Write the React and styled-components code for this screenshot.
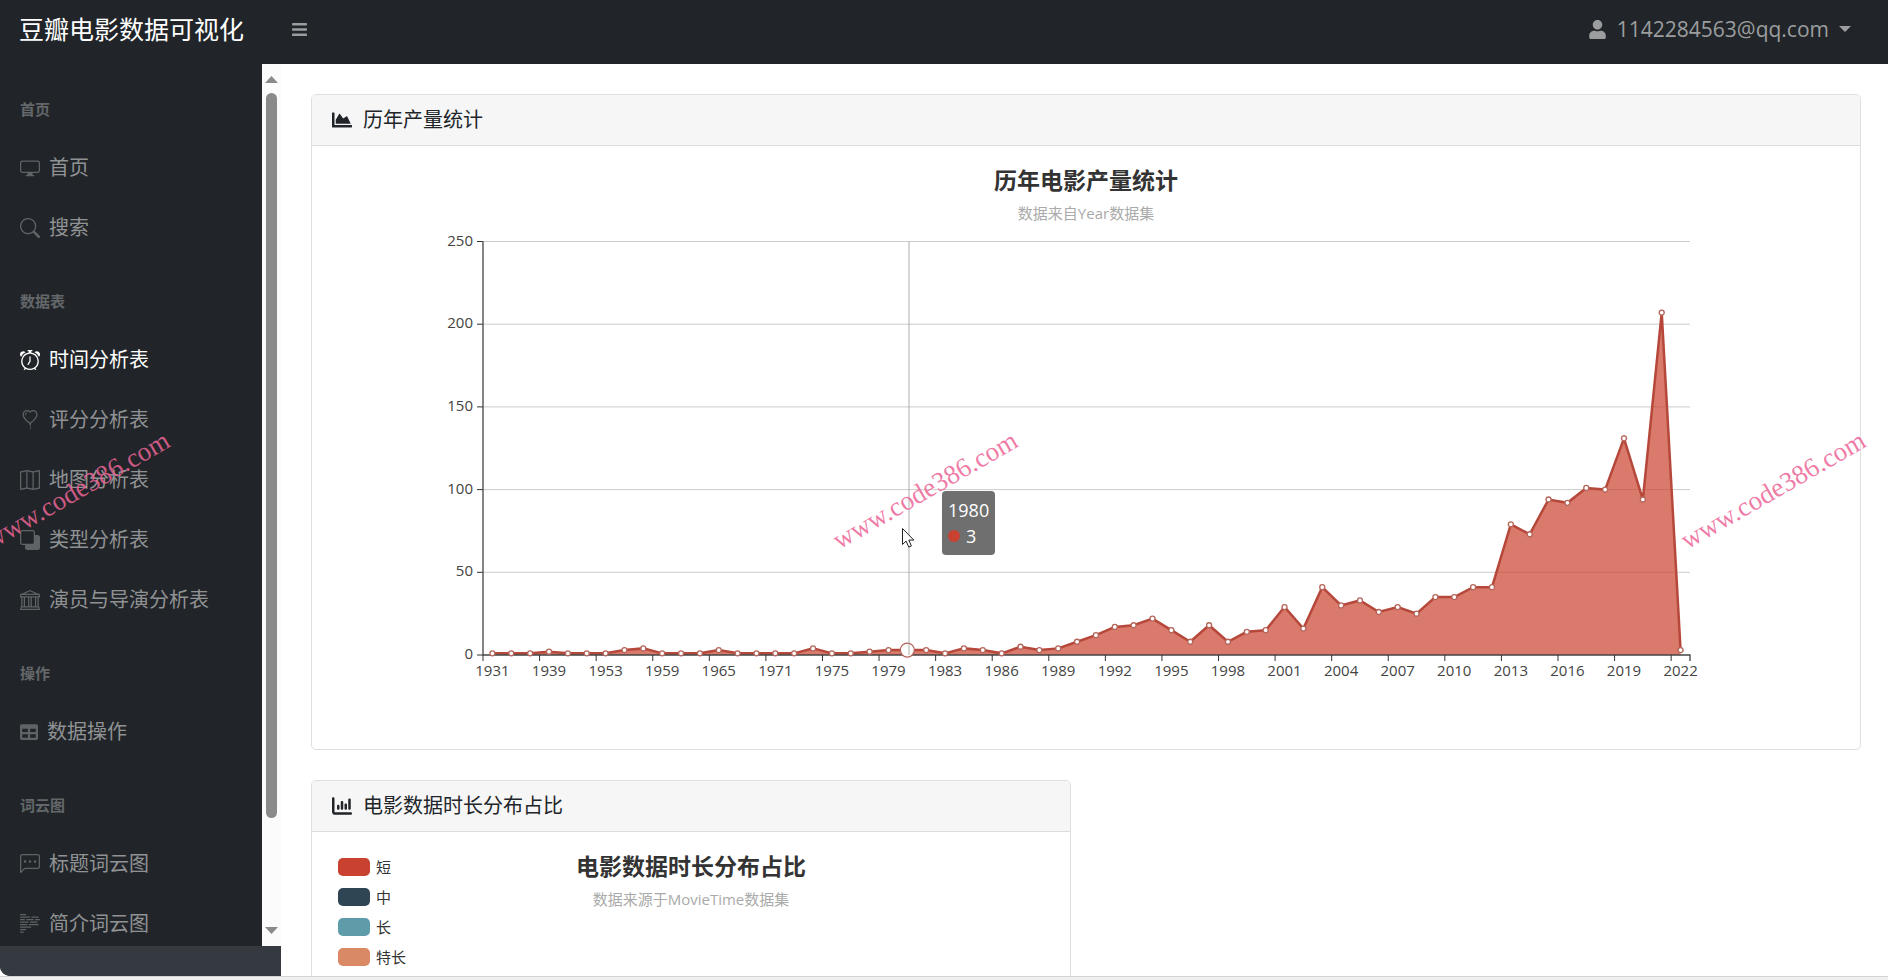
import React from "react";
import styled, { createGlobalStyle } from "styled-components";
import {
  BsDisplay,
  BsSearch,
  BsAlarm,
  BsBalloonHeart,
  BsMap,
  BsSubtract,
  BsBank,
  BsChatLeftDots,
  BsBodyText
} from "react-icons/bs";
import { FaBars, FaUser, FaChartArea, FaTable } from "react-icons/fa";
import { FaChartColumn } from "react-icons/fa6";

const GlobalStyle = createGlobalStyle`
  * {
    box-sizing: border-box;
  }
  body {
    margin: 0;
    background: #fff;
    color: #212529;
    font-family: "Open Sans", "Noto Sans CJK SC", sans-serif;
    font-size: 20px;
  }
`;

const Shell = styled.div`
  position: relative;
  display: flex;
  flex-direction: column;
  height: 100vh;
  overflow: hidden;
`;

const TopBar = styled.header`
  display: flex;
  align-items: center;
  flex-shrink: 0;
  height: 64px;
  padding: 0 37px 6px 19px;
  background: #212529;
`;

const Brand = styled.a`
  width: 272px;
  color: #fff;
  font-size: 25px;
  line-height: 36px;
  text-decoration: none;
`;

const IconButton = styled.button`
  display: flex;
  padding: 0;
  border: 0;
  background: none;
  color: #9b9d9e;
  cursor: pointer;
`;

const UserMenu = styled.button`
  display: flex;
  align-items: center;
  gap: 10px;
  margin-left: auto;
  padding: 0;
  border: 0;
  background: none;
  color: #9b9d9e;
  font-family: inherit;
  font-size: 21px;
  line-height: 30px;
  cursor: pointer;
`;

const Caret = styled.span`
  width: 12px;
  height: 6px;
  background: currentColor;
  clip-path: polygon(0 0, 100% 0, 50% 100%);
`;

const Body = styled.div`
  display: flex;
  flex: 1;
  min-height: 0;
`;

const SideNav = styled.aside`
  display: flex;
  flex-direction: column;
  flex-shrink: 0;
  width: 281px;
  background: #212529;
  border-radius: 0 0 0 10px;
  overflow: hidden;
`;

const SideScroll = styled.div`
  display: flex;
  flex: 1;
  min-height: 0;
`;

const Menu = styled.nav`
  flex: 1;
  padding-top: 2px;
  overflow: hidden;
`;

const MenuHeading = styled.div`
  padding: 32px 20px 18px;
  color: #64676a;
  font-size: 15px;
  font-weight: 700;
  line-height: 22px;
`;

const MenuLink = styled.a`
  display: flex;
  align-items: center;
  gap: 9px;
  padding: 15px 20px;
  color: ${props => (props.$active ? "#fff" : "#909294")};
  line-height: 30px;
  text-decoration: none;
  white-space: nowrap;

  svg {
    color: ${props => (props.$active ? "#fff" : "#5f6366")};
  }
`;

const ScrollTrack = styled.div`
  display: flex;
  flex-direction: column;
  align-items: center;
  width: 19px;
  padding: 12px 0;
  background: #fbfbfb;
`;

const ScrollArrow = styled.span`
  width: 13px;
  height: 7px;
  background: #8a8a8a;
  clip-path: ${props =>
    props.$down ? "polygon(0 0, 100% 0, 50% 100%)" : "polygon(50% 0, 100% 100%, 0 100%)"};
`;

const ScrollRail = styled.div`
  flex: 1;
  width: 11px;
  margin: 10px 0;
`;

const ScrollThumb = styled.div`
  height: 88%;
  border-radius: 6px;
  background: #8a8a8a;
`;

const SideFooter = styled.div`
  flex-shrink: 0;
  height: 30px;
  background: #343a40;
`;

const Content = styled.main`
  flex: 1;
  min-width: 0;
  padding: 30px 27px 0 30px;
  overflow: hidden;
`;

const Card = styled.section`
  margin-bottom: 30px;
  border: 1px solid #dfdfdf;
  border-radius: 5px;
  overflow: hidden;
`;

const CardHeader = styled.h2`
  display: flex;
  align-items: center;
  gap: 11px;
  margin: 0;
  padding: 10px 20px;
  border-bottom: 1px solid #dcdcdc;
  background: #f6f6f6;
  font-size: 20px;
  font-weight: 400;
  line-height: 30px;
`;

const CardBody = styled.div`
  padding: 20px;
`;

const CardRow = styled.div`
  display: grid;
  grid-template-columns: 1fr 1fr;
  gap: 30px;
`;

const ChartHead = styled.div`
  height: 60px;
  text-align: center;
`;

const ChartTitle = styled.h3`
  margin: 0;
  color: #333;
  font-size: 23px;
  font-weight: 700;
  line-height: 28px;
`;

const ChartSubtitle = styled.p`
  margin: 8px 0 0;
  color: #aaa;
  font-size: 15px;
  line-height: 22px;
`;

const Plot = styled.div`
  position: relative;
`;

const PlotArea = styled.svg`
  display: block;
  width: 100%;
`;

const Tooltip = styled.div`
  position: absolute;
  left: 610px;
  top: 265px;
  padding: 6px;
  border-radius: 4px;
  background: #6f6f6f;
  color: #fff;
  font-size: 18px;
  line-height: 26px;
`;

const TooltipValue = styled.div`
  display: flex;
  align-items: center;
  gap: 6px;

  &::before {
    content: "";
    width: 12px;
    height: 12px;
    border-radius: 50%;
    background: #c9412f;
  }
`;

const Pointer = styled.svg`
  position: absolute;
  left: 569px;
  top: 301px;
`;

const PieLayout = styled.div`
  display: grid;
  min-height: 500px;

  > * {
    grid-area: 1 / 1;
  }
`;

const Legend = styled.ul`
  justify-self: start;
  margin: 0;
  padding: 0 6px;
  list-style: none;
`;

const LegendItem = styled.li`
  display: flex;
  align-items: center;
  gap: 6px;
  height: 30px;
  color: #333;
  font-size: 15px;
  line-height: 22px;

  &::before {
    content: "";
    width: 32px;
    height: 18px;
    border-radius: 5px;
    background: ${props => props.$color};
  }
`;

const BottomEdge = styled.div`
  flex-shrink: 0;
  height: 4px;
  border-top: 1px solid #d4d4d4;
  background: #efefef;
`;

const Watermark = styled.span`
  position: absolute;
  left: ${props => props.$left};
  top: 490px;
  color: rgba(236, 100, 150, 0.85);
  font-family: "Liberation Serif", serif;
  font-size: 27px;
  line-height: 30px;
  white-space: nowrap;
  transform: translate(-50%, -50%) rotate(-30deg);
  pointer-events: none;
`;

const menu = [
  {
    heading: "首页",
    links: [
      { label: "首页", icon: BsDisplay },
      { label: "搜索", icon: BsSearch }
    ]
  },
  {
    heading: "数据表",
    links: [
      { label: "时间分析表", icon: BsAlarm, active: true },
      { label: "评分分析表", icon: BsBalloonHeart },
      { label: "地图分析表", icon: BsMap },
      { label: "类型分析表", icon: BsSubtract },
      { label: "演员与导演分析表", icon: BsBank }
    ]
  },
  {
    heading: "操作",
    links: [{ label: "数据操作", icon: FaTable, size: 18 }]
  },
  {
    heading: "词云图",
    links: [
      { label: "标题词云图", icon: BsChatLeftDots },
      { label: "简介词云图", icon: BsBodyText }
    ]
  }
];

const years = [
  1931, 1939, 1953, 1959, 1965, 1971, 1975, 1979, 1983, 1986, 1989,
  1992, 1995, 1998, 2001, 2004, 2007, 2010, 2013, 2016, 2019, 2022
];

const counts = [
  1, 1, 1, 2, 1, 1, 1, 3, 4, 1, 1, 1, 3, 1, 1, 1, 1, 4, 1, 1, 2, 3,
  3, 3, 1, 4, 3, 1, 5, 3, 4, 8, 12, 17, 18, 22, 15, 8, 18, 8, 14, 15,
  29, 16, 41, 30, 33, 26, 29, 25, 35, 35, 41, 41, 79, 73, 94, 92, 101,
  100, 131, 94, 207, 3
];

const legend = [
  { label: "短", color: "#c9412f" },
  { label: "中", color: "#2f4554" },
  { label: "长", color: "#5d9ca8" },
  { label: "特长", color: "#d98a65" }
];

const LEFT = 151;
const RIGHT = 1358;
const BASE = 429;
const BAND = (RIGHT - LEFT) / counts.length;
const HOVERED = 22;
const yOf = value => BASE - value * 1.654;
const xOf = index => LEFT + BAND * (index + 0.5);

const AxisText = styled.text`
  fill: #444;
  font-size: 15px;
`;

const YearChart = () => {
  const line = counts.map((count, i) => `${xOf(i)},${yOf(count)}`).join(" ");
  const area = `${xOf(0)},${BASE} ${line} ${xOf(counts.length - 1)},${BASE}`;
  return (
    <Plot>
      <PlotArea viewBox="0 0 1508 503" role="img" aria-label="历年电影产量统计">
        {[0, 50, 100, 150, 200, 250].map(value => (
          <g key={value}>
            {value > 0 && (
              <line x1={LEFT} x2={RIGHT} y1={yOf(value)} y2={yOf(value)} stroke="#ccc" />
            )}
            <line x1={LEFT - 6} x2={LEFT} y1={yOf(value)} y2={yOf(value)} stroke="#333" />
            <AxisText x={LEFT - 10} y={yOf(value) + 4} textAnchor="end">
              {value}
            </AxisText>
          </g>
        ))}
        <polygon points={area} fill="#c9412f" fillOpacity="0.7" />
        <polyline points={line} fill="none" stroke="#b5483a" strokeWidth="2.5" />
        <path
          d={`M${LEFT} ${yOf(250)}V${BASE}H${RIGHT}v6`}
          fill="none"
          stroke="#444"
          strokeWidth="1.3"
        />
        {years.map((year, i) => (
          <g key={year}>
            <line
              x1={LEFT + BAND * i * 3}
              x2={LEFT + BAND * i * 3}
              y1={BASE}
              y2={BASE + 6}
              stroke="#333"
            />
            <AxisText x={xOf(i * 3)} y={BASE + 21} textAnchor="middle">
              {year}
            </AxisText>
          </g>
        ))}
        {counts.map((count, i) => (
          <circle
            key={i}
            cx={xOf(i)}
            cy={yOf(count)}
            r={i === HOVERED ? 7 : 2.5}
            fill="#fff"
            stroke="#b5655a"
            strokeWidth="1.3"
          />
        ))}
        <line x1="577" x2="577" y1={yOf(250)} y2={BASE} stroke="#999" strokeOpacity="0.8" />
      </PlotArea>
      <Tooltip>
        <div>1980</div>
        <TooltipValue>3</TooltipValue>
      </Tooltip>
      <Pointer width="14" height="22" viewBox="0 0 14 22">
        <path
          d="M1.5 1.5v16l3.6-3.4 2.7 6 2.6-1.1-2.6-5.9h5z"
          fill="#fff"
          stroke="#222"
          strokeWidth="1"
        />
      </Pointer>
    </Plot>
  );
};

const App = () => {
  function renderedLinks(links) {
    return links.map(({ label, icon: Icon, active, size }) => (
      <MenuLink key={label} href="#" $active={active}>
        <Icon size={size || 20} />
        {label}
      </MenuLink>
    ));
  }

  return (
    <Shell>
      <GlobalStyle />
      <TopBar>
        <Brand href="#">豆瓣电影数据可视化</Brand>
        <IconButton aria-label="菜单">
          <FaBars size={17} />
        </IconButton>
        <UserMenu>
          <FaUser size={19} />
          1142284563@qq.com
          <Caret />
        </UserMenu>
      </TopBar>
      <Body>
        <SideNav>
          <SideScroll>
            <Menu>
              {menu.map(group => (
                <div key={group.heading}>
                  <MenuHeading>{group.heading}</MenuHeading>
                  {renderedLinks(group.links)}
                </div>
              ))}
            </Menu>
            <ScrollTrack>
              <ScrollArrow />
              <ScrollRail>
                <ScrollThumb />
              </ScrollRail>
              <ScrollArrow $down />
            </ScrollTrack>
          </SideScroll>
          <SideFooter />
        </SideNav>
        <Content>
          <Card>
            <CardHeader>
              <FaChartArea size={20} />
              历年产量统计
            </CardHeader>
            <CardBody>
              <ChartHead>
                <ChartTitle>历年电影产量统计</ChartTitle>
                <ChartSubtitle>数据来自Year数据集</ChartSubtitle>
              </ChartHead>
              <YearChart />
            </CardBody>
          </Card>
          <CardRow>
            <Card>
              <CardHeader>
                <FaChartColumn size={20} />
                电影数据时长分布占比
              </CardHeader>
              <CardBody>
                <PieLayout>
                  <ChartHead>
                    <ChartTitle>电影数据时长分布占比</ChartTitle>
                    <ChartSubtitle>数据来源于MovieTime数据集</ChartSubtitle>
                  </ChartHead>
                  <Legend>
                    {legend.map(({ label, color }) => (
                      <LegendItem key={label} $color={color}>
                        {label}
                      </LegendItem>
                    ))}
                  </Legend>
                </PieLayout>
              </CardBody>
            </Card>
          </CardRow>
        </Content>
      </Body>
      <BottomEdge />
      {["4.1%", "49%", "93.9%"].map(left => (
        <Watermark key={left} $left={left}>
          www.code386.com
        </Watermark>
      ))}
    </Shell>
  );
};

export default App;
